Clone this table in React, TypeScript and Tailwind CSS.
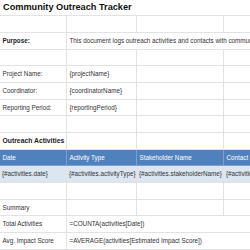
const cell = 'border-r border-b border-[#e2e2e2] px-[2.5px] flex items-center whitespace-nowrap overflow-visible'

function Row({ label, value, bold }: { label?: string; value?: string; bold?: boolean }) {
  return (
    <>
      <div className={`${cell} ${bold ? 'font-bold text-[#222]' : ''}`}>{label}</div>
      <div className={cell}>{value}</div>
      <div className={cell} />
      <div className={cell} />
    </>
  )
}

function SpanRow({ label, value, bold }: { label: string; value: string; bold?: boolean }) {
  return (
    <>
      <div className={`${cell} ${bold ? 'font-bold text-[#222]' : ''}`}>{label}</div>
      <div className={`${cell} col-span-3 border-r-0`}>{value}</div>
    </>
  )
}

export default function App() {
  return (
    <div className="h-[250px] w-[250px] overflow-hidden bg-white text-[6.3px] text-[#333] font-['Liberation_Sans',Arial,sans-serif]">
      <div className="grid w-[300px] grid-cols-[67px_70px_87px_76px] grid-rows-[16px_17px_17px_16px_17px_17px_16px_17px_17px_16px_17px_17px_16px_17px_17px]">
        <div className="col-span-4 flex items-center border-b border-[#e2e2e2] px-[3px] text-[9.2px] font-bold text-[#111]">
          Community Outreach Tracker
        </div>
        <Row />
        <SpanRow label="Purpose:" value="This document logs outreach activities and contacts with community stakeholders." bold />
        <Row />
        <Row label="Project Name:" value="{projectName}" />
        <Row label="Coordinator:" value="{coordinatorName}" />
        <Row label="Reporting Period:" value="{reportingPeriod}" />
        <Row />
        <div className={`${cell} text-[6.8px] font-bold text-[#222]`}>Outreach Activities</div>
        <div className={cell} />
        <div className={cell} />
        <div className={cell} />
        {['Date', 'Activity Type', 'Stakeholder Name', 'Contact Info'].map((h) => (
          <div key={h} className="flex items-center whitespace-nowrap border-r border-b border-[#7d9fcf] bg-[#4f81bd] px-[2.5px] text-white">
            {h}
          </div>
        ))}
        {['{#activities.date}', '{#activities.activityType}', '{#activities.stakeholderName}', '{#activities.contactInfo}'].map((d) => (
          <div key={d} className="flex items-center overflow-hidden whitespace-nowrap border-r border-b border-[#e2e2e2] bg-[#dce6f1] px-[2px]">
            {d}
          </div>
        ))}
        <Row />
        <Row label="Summary" />
        <SpanRow label="Total Activities" value="=COUNTA(activities[Date])" />
        <SpanRow label="Avg. Impact Score" value="=AVERAGE(activities[Estimated Impact Score])" />
      </div>
    </div>
  )
}
